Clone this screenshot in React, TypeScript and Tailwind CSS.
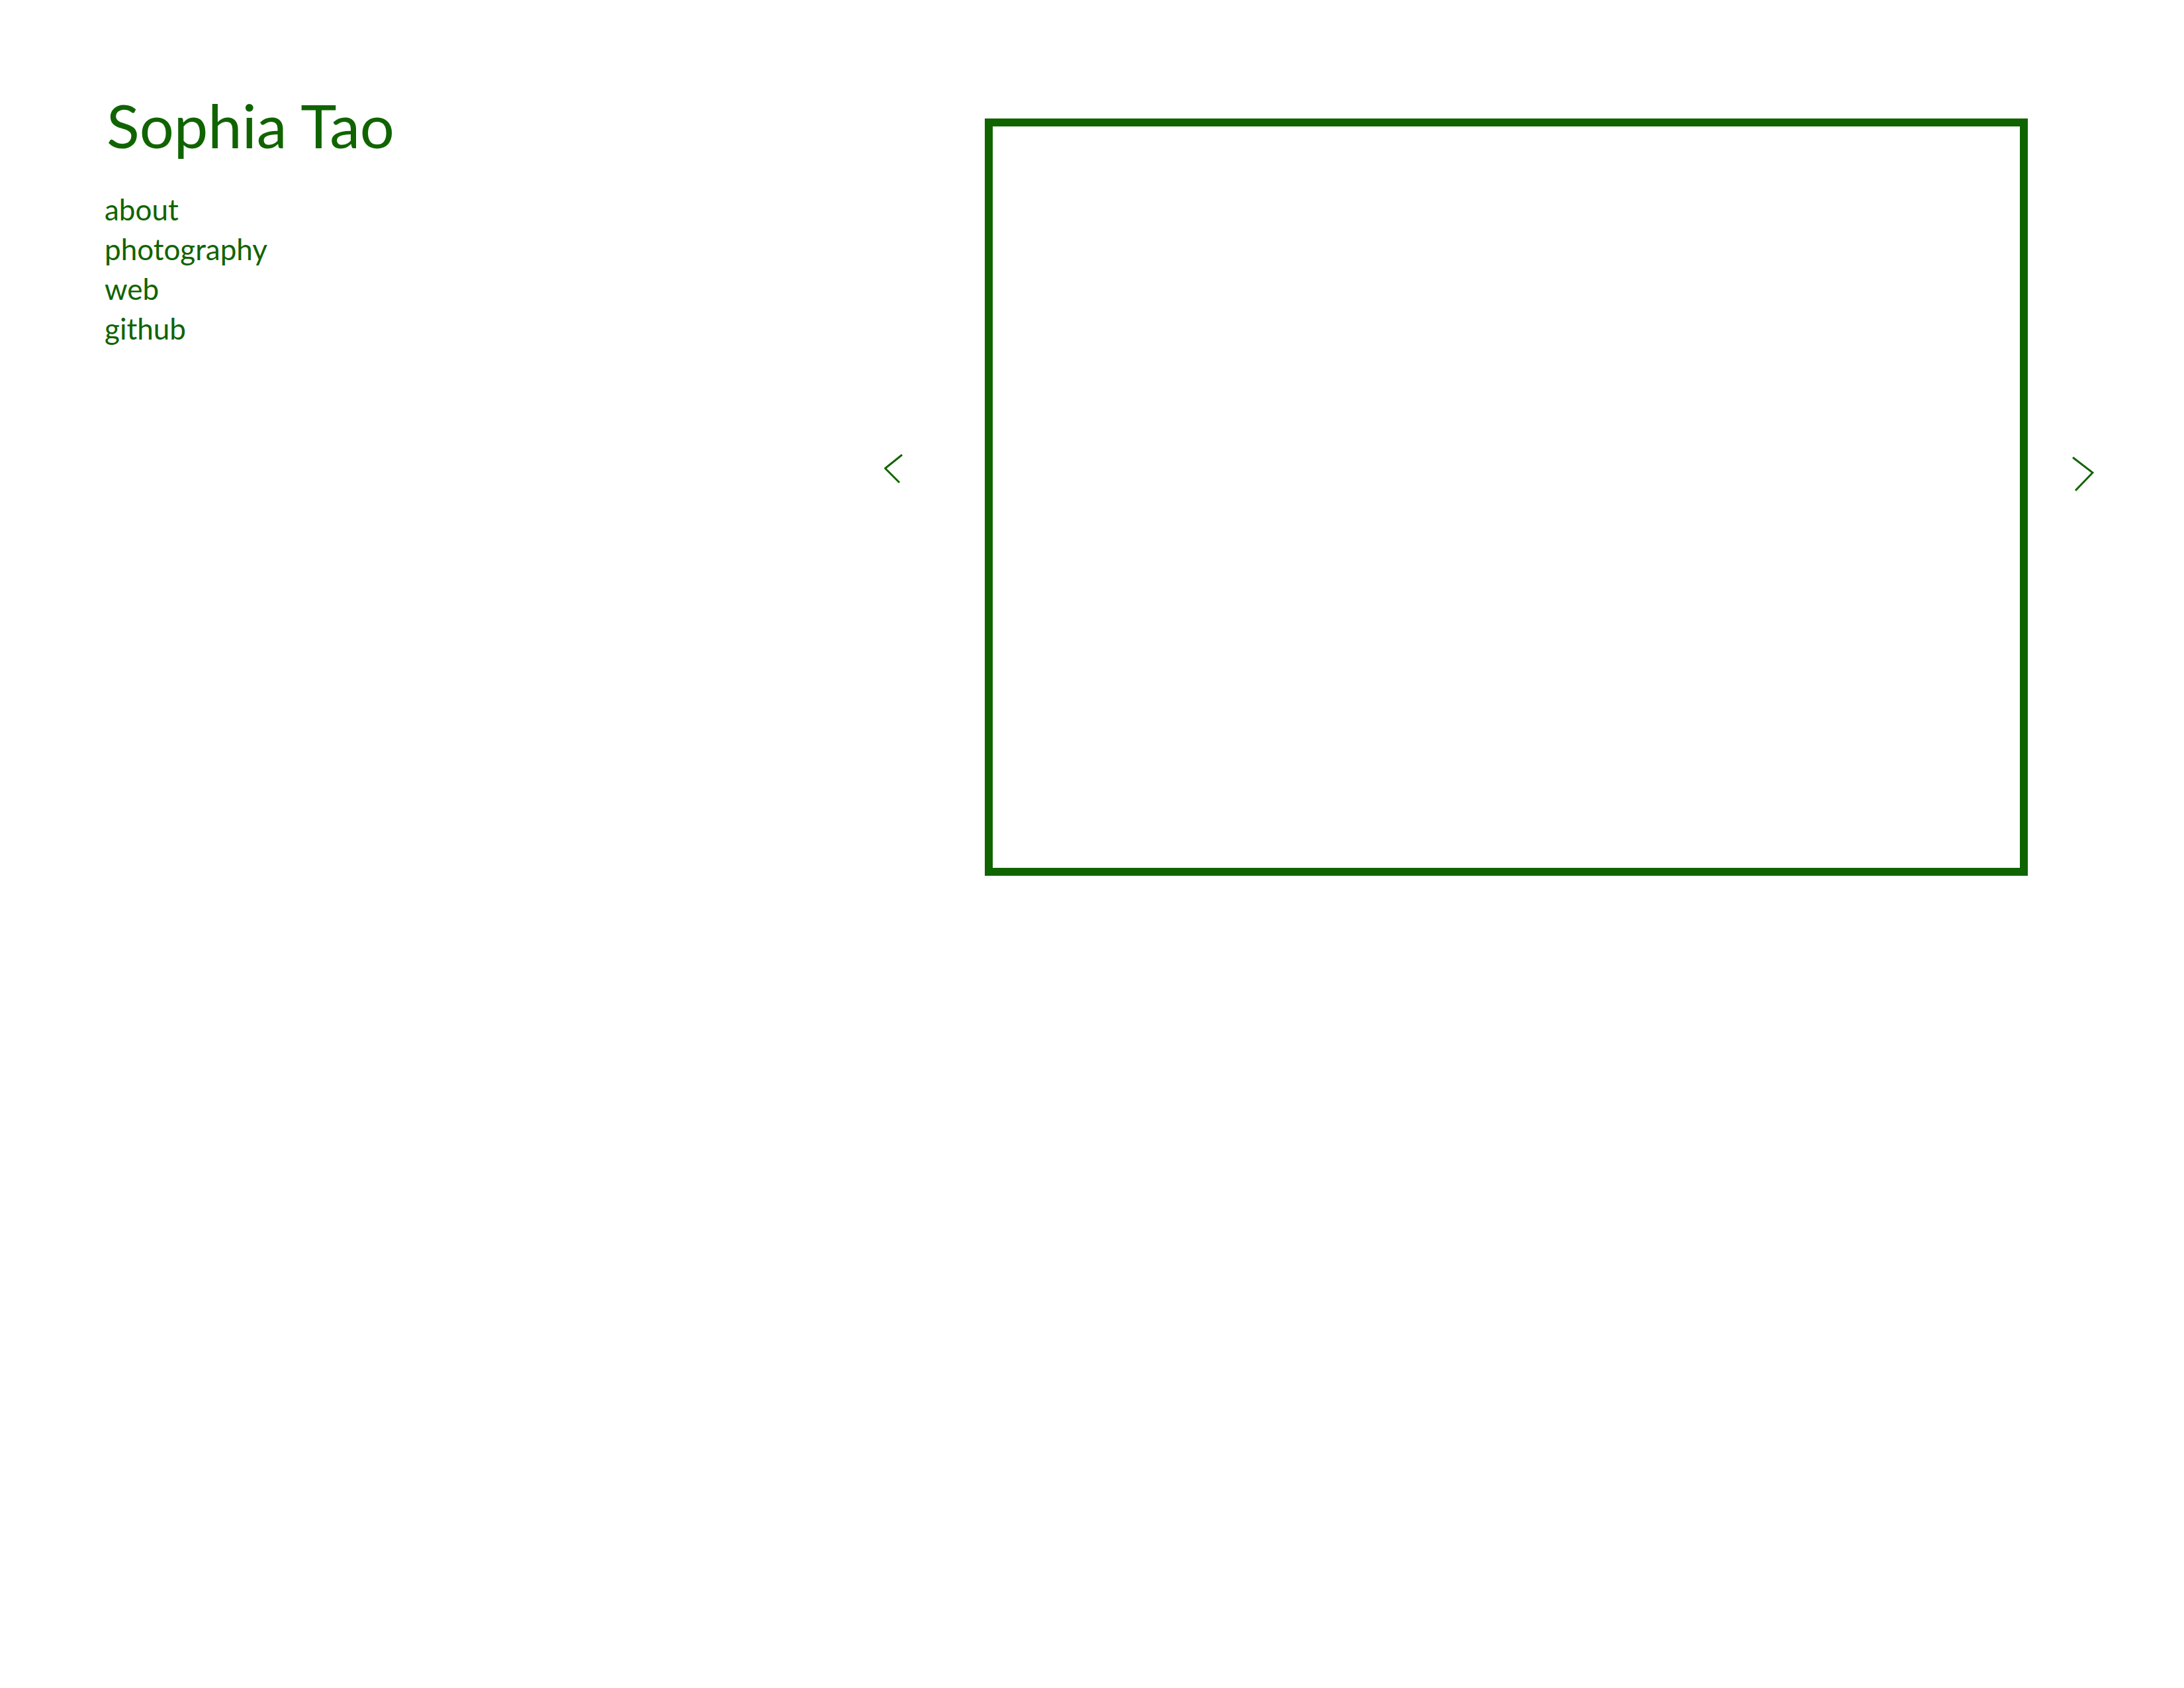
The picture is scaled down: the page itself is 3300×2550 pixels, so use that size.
import React from 'react';

const links = ['about', 'photography', 'web', 'github'];

export default function App() {
    return (
        <div className="w-[3300px] h-[2550px] bg-white flex items-start text-[#106400]" style={{ fontFamily: 'Lato, "Open Sans", sans-serif' }}>
            <aside className="ml-[158px] mt-[129px] w-[1178px] shrink-0">
                <h1 className="text-[92px] leading-[120px] font-normal ml-[3px]">Sophia Tao</h1>
                <nav className="mt-[37px] flex flex-col text-[44px] leading-[60px] font-normal">
                    {links.map((l) => (
                        <a key={l} href="#" className="w-fit">{l}</a>
                    ))}
                </nav>
            </aside>

            <div className="flex items-start mt-[179px]">
                <button className="mt-[507px] w-[28px] h-[45px]" aria-label="previous">
                    <svg width="28" height="45" viewBox="0 0 28 45" fill="none" stroke="currentColor" strokeWidth="3">
                        <path d="M27 1 L1.5 21.5 L23 43" />
                    </svg>
                </button>
                <div className="ml-[124px] w-[1576px] h-[1144px] border-[12px] border-[#106400]" />
                <button className="ml-[67px] mt-[511px] w-[33px] h-[52px]" aria-label="next">
                    <svg width="33" height="52" viewBox="0 0 33 52" fill="none" stroke="currentColor" strokeWidth="3">
                        <path d="M1 1 L31 24 L5 51" />
                    </svg>
                </button>
            </div>
        </div>
    );
}
